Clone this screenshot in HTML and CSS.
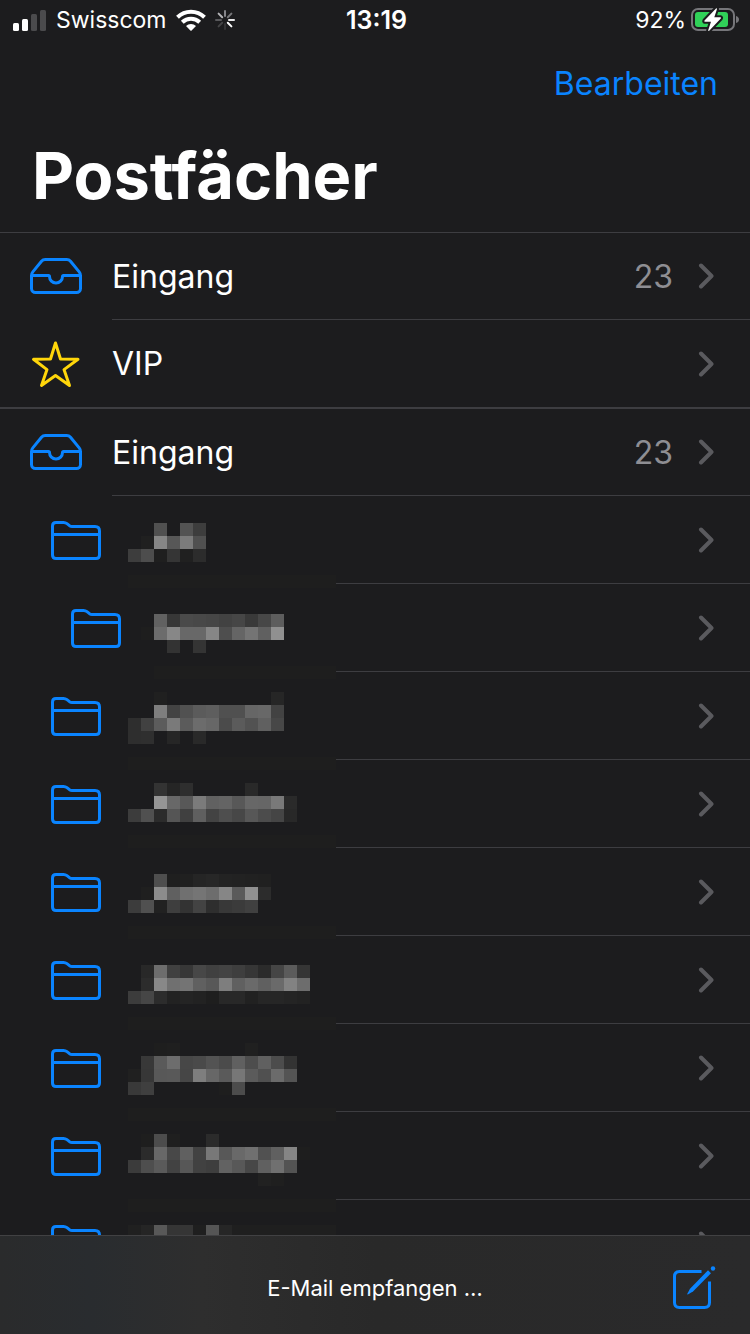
FILE: index.html
```html
<!DOCTYPE html>
<html lang="de">
<head>
    <meta charset="UTF-8">
    <meta name="viewport" content="width=device-width, initial-scale=1.0">
    <title>Postfächer</title>
    <link rel="stylesheet" href="styles.css">
</head>
<body>
    <!-- shared icons -->
    <svg class="sprite" aria-hidden="true">
        <symbol id="inbox" viewBox="0 0 54 39">
            <path d="M2.5 18.500V31.500a4 4 0 0 0 4 4h41a4 4 0 0 0 4-4V18.500q0-2-1.300-3.600L41.500 4.300Q40 2.500 37.700 2.500H16.300Q14 2.500 12.500 4.300L3.800 14.900Q2.500 16.500 2.500 18.500ZM2.500 18.500H19.500Q20.500 18.500 20.500 19.500a6.500 6.500 0 0 0 13 0q0-1 1-1H51.500"/>
        </symbol>
        <symbol id="star" viewBox="0 0 50 48">
            <path d="M24.500 3 29.500 19 47 19.300 33 29.600 38.500 45.500 24.500 35.500 10.500 45.500 16 29.600 2.500 19.300 19.500 19Z"/>
        </symbol>
        <symbol id="folder" viewBox="0 0 52 40">
            <path d="M2.500 35V6q0-3.500 3.500-3.500h7.500q2 0 3.500 1.200l2.500 2q1.200.8 2.500.8H45q4.500 0 4.500 4.500V35q0 3.500-3.500 3.500H6q-3.500 0-3.500-3.500ZM2.500 14.500H49.500"/>
        </symbol>
        <symbol id="chevron" viewBox="0 0 16 26">
            <path d="M3 2.500 13.500 13 3 23.500"/>
        </symbol>
    </svg>

    <div class="screen">
        <div class="status">
            <div class="status-left">
                <svg width="34" height="22" viewBox="0 0 34 22" aria-hidden="true">
                    <g fill="#fff"><rect x="0" y="14" width="6" height="8" rx="1.500"/><rect x="9" y="10" width="6" height="12" rx="1.500"/></g>
                    <g fill="#4b4b4d"><rect x="18" y="5" width="6" height="17" rx="1.500"/><rect x="27" y="1" width="6" height="21" rx="1.500"/></g>
                </svg>
                <span>Swisscom</span>
                <svg width="30" height="22" viewBox="0 0 30 22" aria-hidden="true">
                    <g fill="none" stroke="#fff" stroke-width="4"><path d="M1.500 8.300a19.300 19.300 0 0 1 27 0"/><path d="M6.300 13.300a12.500 12.500 0 0 1 17.400 0"/></g>
                    <path fill="#fff" d="M10 17a7.200 7.200 0 0 1 10 0L15.600 21.500q-.6.500-1.200 0Z"/>
                </svg>
                <svg class="spinner" width="20" height="20" viewBox="0 0 20 20" aria-hidden="true">
                    <path stroke="#85858a" d="M10 1v5"/>
                    <path stroke="#77777a" d="m16.400 3.600-3.600 3.600"/>
                    <path stroke="#e8e8ea" d="M19 10h-5"/>
                    <path stroke="#fff" d="m16.400 16.400-3.600-3.600"/>
                    <path stroke="#343436" d="M10 19v-5"/>
                    <path stroke="#444446" d="m3.600 16.400 3.600-3.600"/>
                    <path stroke="#59595c" d="M1 10h5"/>
                    <path stroke="#b5b5b8" d="m3.600 3.600 3.600 3.600"/>
                </svg>
            </div>
            <div class="time">13:19</div>
            <div class="status-right">
                <span>92%</span>
                <svg width="50" height="26" viewBox="0 0 50 26" aria-hidden="true">
                    <rect x="2" y="2" width="42" height="21" rx="6" fill="none" stroke="#76767a" stroke-width="2"/>
                    <path d="M46 9q3 1 3 3.500T46 16Z" fill="#76767a"/>
                    <rect x="5" y="5" width="33" height="15" rx="3" fill="#30d158"/>
                    <path d="M26 1.500 14.500 13.500q-.7 1 .4 1.300H21l-2.800 8.500q0 1 1 .4L30.800 11.500q.7-1-.4-1.300H24.300L27 2q0-1-1-.5Z" fill="#fff" stroke="#1c1c1e" stroke-width="4" stroke-linejoin="round" paint-order="stroke"/>
                </svg>
            </div>
        </div>

        <header class="header">
            <button type="button" class="edit">Bearbeiten</button>
            <h1>Postfächer</h1>
        </header>

        <main class="content">
            <ul class="group">
                <li><a class="row" href="#">
                    <span class="icon"><svg class="inbox"><use href="#inbox"/></svg></span>
                    <span class="body"><span class="name">Eingang</span><span class="count">23</span><svg class="chevron"><use href="#chevron"/></svg></span>
                </a></li>
                <li><a class="row last" href="#">
                    <span class="icon"><svg class="star"><use href="#star"/></svg></span>
                    <span class="body"><span class="name">VIP</span><svg class="chevron"><use href="#chevron"/></svg></span>
                </a></li>
            </ul>

            <ul class="group">
                <li><a class="row" href="#">
                    <span class="icon"><svg class="inbox"><use href="#inbox"/></svg></span>
                    <span class="body"><span class="name">Eingang</span><span class="count">23</span><svg class="chevron"><use href="#chevron"/></svg></span>
                </a></li>
            </ul>
            <ul id="folders"></ul>
        </main>

        <footer class="toolbar">
            <p>E-Mail empfangen …</p>
            <button type="button" class="compose" aria-label="Neue E-Mail">
                <svg width="44" height="48" viewBox="0 -4 44 48" aria-hidden="true">
                    <path fill="none" stroke="#0a84ff" stroke-width="3" d="M29.500 3.500H7.500q-5 0-5 5V34.500q0 5 5 5H32.500q5 0 5-5V13.500"/>
                    <path fill="#0a84ff" d="M36 2.300 39 5.300 21 23.600 15.800 26.400Q15 26.700 15.300 25.800L18 20.800Z"/>
                    <circle cx="41" cy="0.500" r="2.200" fill="#0a84ff"/>
                </svg>
            </button>
        </footer>
    </div>

    <script src="script.js"></script>
</body>
</html>
```

FILE: styles.css
```css
* {
    box-sizing: border-box;
}
body {
    margin: 0;
    background-color: #1c1c1e;
    color: #fff;
    font-family: Inter, "Liberation Sans", sans-serif;
}
button {
    background: none;
    border: none;
    padding: 0;
    font: inherit;
    color: #0a84ff;
    cursor: pointer;
}
ul {
    list-style: none;
    margin: 0;
    padding: 0;
}
.sprite {
    display: none;
}
.screen {
    display: flex;
    flex-direction: column;
    height: 100vh;
}

/* status bar */
.status {
    display: grid;
    grid-template-columns: 1fr auto 1fr;
    align-items: center;
    height: 40px;
    padding: 0 10px 0 13px;
    font-size: 23px;
    flex-shrink: 0;
}
.status-left, .status-right {
    display: flex;
    align-items: center;
    gap: 9px;
}
.status-right {
    justify-content: flex-end;
    gap: 4px;
}
.time {
    font-size: 25px;
    font-weight: 600;
}
.spinner {
    fill: none;
    stroke-width: 2;
    stroke-linecap: round;
}

/* header */
.header {
    height: 192px;
    padding: 20px 32px 0;
    flex-shrink: 0;
}
.edit {
    display: block;
    margin-left: auto;
    font-size: 32px;
    line-height: 48px;
}
h1 {
    margin: 28px 0 0;
    font-size: 65px;
    line-height: 80px;
    font-weight: 700;
}

/* mailbox list */
.content {
    flex: 1;
    min-height: 0;
    overflow-y: auto;
    scrollbar-width: none;
}
.row {
    display: flex;
    height: 88px;
    color: #fff;
    text-decoration: none;
}
.group li:first-child .row {
    border-top: 1px solid #3d3d41;
}
.row.last {
    border-bottom: 1px solid #3d3d41;
}
.row.last .body {
    border-bottom: none;
}
.icon {
    display: flex;
    align-items: center;
    width: 112px;
    padding-left: 29px;
    flex-shrink: 0;
}
.icon svg {
    fill: none;
    stroke: #0a84ff;
    stroke-width: 3;
    stroke-linejoin: round;
}
.inbox {
    width: 54px;
    height: 39px;
}
.icon .star {
    width: 54px;
    height: 48px;
    stroke: #ffd60a;
}
.folder {
    width: 52px;
    height: 40px;
}
.body {
    display: flex;
    flex: 1;
    align-items: center;
    justify-content: flex-end;
    padding-right: 36px;
    border-bottom: 1px solid #3d3d41;
}
.name {
    flex: 1;
    font-size: 32px;
}
.count {
    margin-right: 25px;
    font-size: 32px;
    color: #8e8e93;
}
.chevron {
    width: 16px;
    height: 26px;
    fill: none;
    stroke: #5a5a5e;
    stroke-width: 4;
    stroke-linecap: round;
    stroke-linejoin: round;
}
.folder-row .icon {
    width: 128px;
    padding-left: 50px;
}
.folder-row.nested .icon {
    padding-left: 70px;
}
.mosaic {
    width: 208px;
    height: 88px;
    flex-shrink: 0;
    overflow: visible;
    shape-rendering: crispEdges;
}

/* bottom toolbar */
.toolbar {
    display: grid;
    grid-template-columns: 1fr auto 1fr;
    align-items: center;
    height: 99px;
    padding: 6px 34px 0;
    border-top: 1px solid #414143;
    background: linear-gradient(90deg, #2a2b2c, #292c2f 12%, #2e2e2e 27%, #292929 50%, #2a2a2b);
    flex-shrink: 0;
}
.toolbar p {
    grid-column: 2;
    margin: 0;
    font-size: 22px;
}
.compose {
    justify-self: end;
    height: 48px;
}
.compose svg {
    display: block;
    overflow: visible;
}
```

FILE: script.js
```js
// Folder names are masked: each cell is a 13px grey square, ".." is empty
const CELL = 13;
const BAND = '1e 1e 1e 1e 1e 1e 1e 1e 1e 1e 1e 1e 1e 1e 1e 1e';

const folders = [
    { top: 27, mask: [
        '.. .. 50 .. 53 3d',
        '.. 20 86 57 7b 50',
        '3d 4d 1f 35 20 2c',
        '',
        BAND] },
    { top: 30, nested: true, mask: [
        '.. .. 61 37 4a 48 46 42 46 39 47 5d',
        '.. 1e 6c 87 68 68 86 4e 65 74 60 90',
        '.. .. .. 33 .. 34',
        '',
        '.. .. 1e 1e 1e 1e 1e 1e 1e 1e 1e 1e 1e 1e 1e 1e'] },
    { top: 20, mask: [
        '.. .. 20 .. .. .. .. .. .. .. .. 26',
        '.. .. 7e 43 51 5b 5e 50 50 66 68 42',
        '2e 41 5c 7a 5b 6c 67 4b 5b 52 60 47',
        '2e 2f .. 26 .. 29',
        '',
        BAND] },
    { top: 23, mask: [
        '.. .. 33 25 2e .. .. .. .. 29',
        '.. .. 95 68 58 7b 61 64 58 67 66 79 2a',
        '3c 50 2b 55 40 5f 43 4e 47 57 4c 45 28',
        '',
        BAND] },
    { top: 26, mask: [
        '.. .. 4e 1f 20 25 27 23 22 21 20',
        '.. 1f 8c 60 70 75 6d 86 5a 90 2c',
        '3c 50 21 3e 33 43 2e 38 3b 40',
        '',
        BAND] },
    { top: 29, mask: [
        '.. 28 6d 40 37 47 40 43 3e 36 2b 45 5b 35',
        '.. 2c 88 70 74 60 58 7e 60 6a 60 6a 82 6d',
        '3c 46 2c 22 24 22 1e 28 28 21 26 26 24 22',
        '',
        BAND] },
    { top: 19, mask: [
        '.. .. 1e 1f .. .. .. .. .. 20',
        '.. 38 5a 6d 47 4a 53 4b 60 4d 60 4c 33',
        '20 37 58 59 46 7e 67 5a 77 5b 50 6b 54',
        '39 3f .. .. .. .. .. 1e 4c',
        '',
        BAND] },
    { top: 22, mask: [
        '.. 1e 4c 1f .. .. 2b',
        '.. 2b 68 48 60 42 78 58 69 70 51 60 85 1e',
        '3b 4e 5a 42 57 41 3e 62 58 47 60 70 53',
        '.. .. .. .. .. .. .. .. .. .. 21 1f',
        '',
        BAND] },
    { top: 25, mask: [
        '20 25 58 35 35 1f 55 26 1f 1f 1f 1f 1f 1f 1f 1f'] }
];

function drawMask(folder) {
    let rects = '';
    folder.mask.forEach((line, y) => {
        line.split(' ').forEach((v, x) => {
            if (v && v !== '..') {
                rects += `<rect x="${x * CELL}" y="${folder.top + y * CELL}" width="${CELL}" height="${CELL}" fill="#${v}${v}${v}"/>`;
            }
        });
    });
    return `<svg class="mosaic" aria-hidden="true">${rects}</svg>`;
}

document.getElementById('folders').innerHTML = folders.map(folder => `
    <li><a class="row folder-row${folder.nested ? ' nested' : ''}" href="#" aria-label="Ordner">
        <span class="icon"><svg class="folder"><use href="#folder"/></svg></span>
        ${drawMask(folder)}
        <span class="body"><svg class="chevron"><use href="#chevron"/></svg></span>
    </a></li>`).join('');
```
